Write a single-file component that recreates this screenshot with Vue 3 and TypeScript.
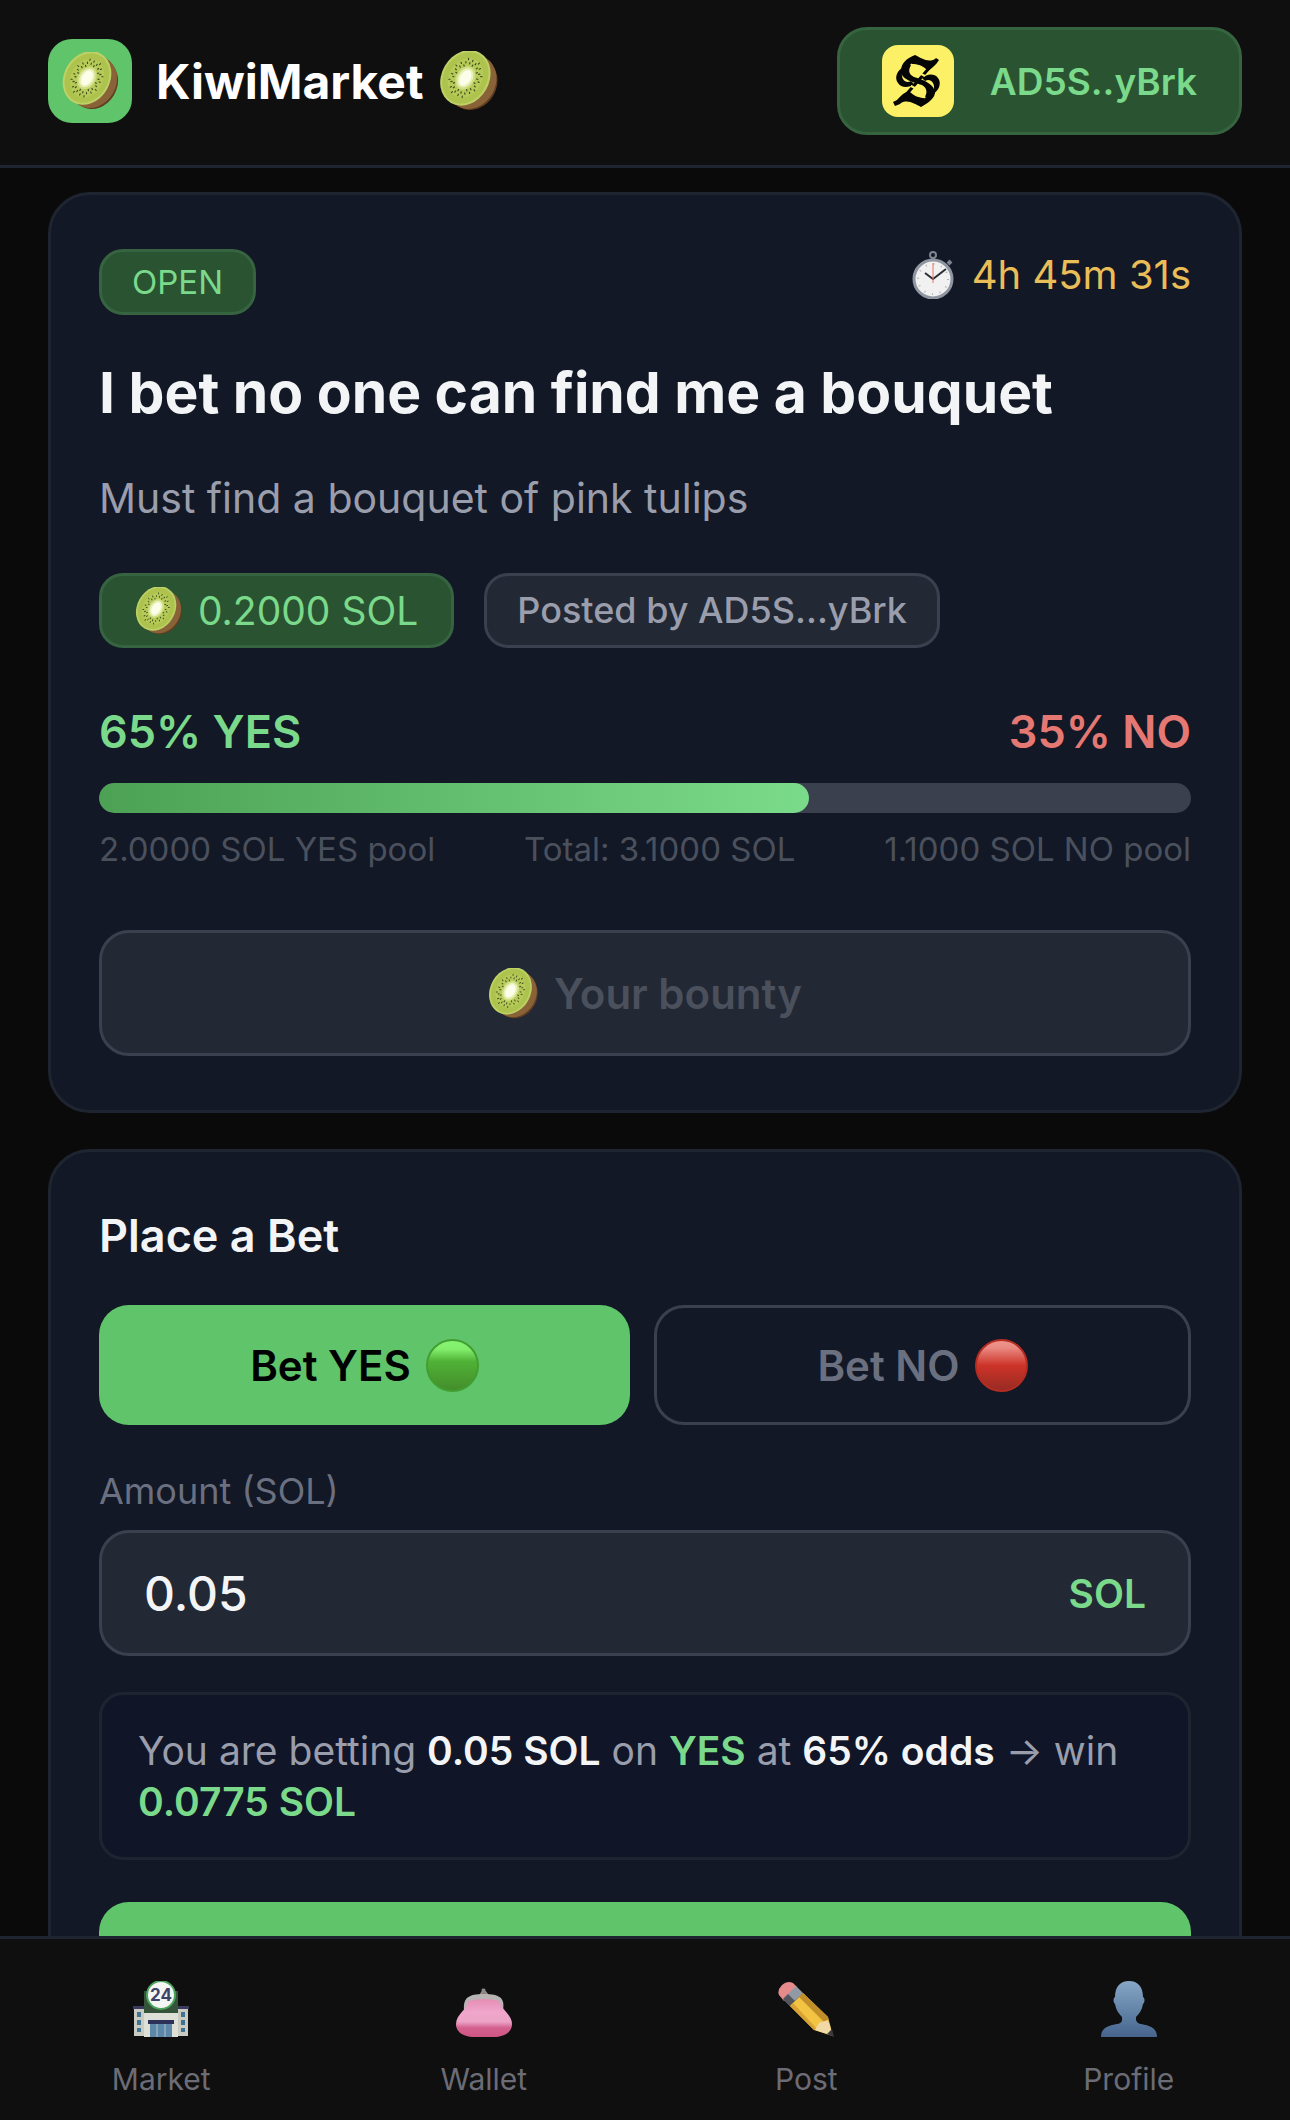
<script setup lang="ts">
import { computed, defineComponent, h, ref } from 'vue'

type Side = 'YES' | 'NO'

interface Tab {
  id: 'market' | 'wallet' | 'post' | 'profile'
  label: string
}

const tabs: Tab[] = [
  { id: 'market', label: 'Market' },
  { id: 'wallet', label: 'Wallet' },
  { id: 'post', label: 'Post' },
  { id: 'profile', label: 'Profile' },
]

const yesPool = 2
const noPool = 1.1
const yesOdds = computed(() => Math.round((yesPool / (yesPool + noPool)) * 100))
const total = computed(() => (yesPool + noPool).toFixed(4))

const side = ref<Side>('YES')
const amount = ref('0.05')
const odds = computed(() => (side.value === 'YES' ? yesOdds.value : 100 - yesOdds.value))
const payout = computed(() => {
  const pool = side.value === 'YES' ? yesPool : noPool
  return ((Number(amount.value) || 0) * (yesPool + noPool) / pool).toFixed(4)
})

// Seeds radiate in uneven rings around the pale core of the fruit.
const seeds = Array.from({ length: 40 }, (_, i) => {
  const a = (i / 40) * Math.PI * 2
  const r = 1 + ((i * 2) % 5) * 0.11
  return {
    x1: Math.cos(a) * 9.5 * r,
    y1: Math.sin(a) * 13 * r,
    x2: Math.cos(a) * (9.5 * r + 1.2),
    y2: Math.sin(a) * (13 * r + 1.4),
  }
})

const KiwiIcon = defineComponent({
  setup: () => () =>
    h('svg', { viewBox: '1 0 57 58', 'aria-hidden': 'true' }, [
      h('ellipse', { cx: 34, cy: 32, rx: 22, ry: 26, fill: '#5f3d22', transform: 'rotate(30 34 32)' }),
      h('ellipse', { cx: 32, cy: 30, rx: 23, ry: 27, fill: '#8a6238', transform: 'rotate(30 32 30)' }),
      h('g', { transform: 'translate(26 26) rotate(30)' }, [
        h('ellipse', { rx: 23, ry: 28, fill: '#bdd166' }),
        h('ellipse', { rx: 21, ry: 26, fill: '#aec34d' }),
        h('ellipse', { rx: 16, ry: 20, fill: '#b6ca58' }),
        h('ellipse', { rx: 9, ry: 12, fill: '#cfdd83' }),
        ...seeds.map((s) => h('line', { ...s, stroke: '#3d4a1e', 'stroke-width': 1.1, 'stroke-linecap': 'round' })),
        h('ellipse', { rx: 7, ry: 10, fill: '#e9f1b8' }),
        h('ellipse', { rx: 5, ry: 8, fill: '#fdfeea' }),
      ]),
    ]),
})
</script>

<template>
  <div class="app">
    <header class="topbar">
      <a class="brand" href="#">
        <span class="brand-tile"><KiwiIcon class="kiwi-tile" /></span>
        <span class="brand-name">KiwiMarket</span>
        <KiwiIcon class="kiwi-brand" />
      </a>
      <button class="wallet" type="button">
        <svg class="wallet-logo" viewBox="0 0 72 72" aria-hidden="true">
          <rect width="72" height="72" rx="16" fill="#fcf067" />
          <g fill="#050505">
            <path d="M33 10C39 13 46 18 53 14L54 13L57 15C54 20 50 23 46 26C41 20 35 19 30 19C26 24 26 29 32 32C43 35 53 40 53 48C52 54 46 58 39 62C33 59 26 54 19 58L18 59L13 61L11 57L15 55C19 50 23 47 27 46C32 51 37 53 42 53C46 48 45 43 40 40C30 37 19 34 19 26C19 18 25 13 33 10Z" />
            <path d="M22 22C15 25 12 33 16 38C19 43 27 43 32 39L29 36C24 39 19 35 20 27Z" />
            <path d="M50 50C57 46 60 38 56 33C52 28 45 29 40 33L43 36C48 33 53 37 52 45Z" />
          </g>
          <path d="M48 22L36 36L22 52" fill="none" stroke="#050505" stroke-width="3" />
          <path d="M29 19Q34 27 43 31M43 53Q38 45 29 41" fill="none" stroke="#fcf067" stroke-width="2" />
        </svg>
        <span>AD5S..yBrk</span>
      </button>
    </header>

    <main class="content">
      <section class="card">
        <div class="card-head">
          <span class="status">OPEN</span>
          <span class="timer">
            <svg class="stopwatch" viewBox="0 0 42 48" aria-hidden="true">
              <circle cx="21" cy="4" r="3" fill="none" stroke="#7f858f" stroke-width="2" />
              <path d="M21 6V10M36 13L39 10" stroke="#7f858f" stroke-width="4" />
              <circle cx="21" cy="28" r="19" fill="#f1f1f1" stroke="#8f96a1" stroke-width="3" />
              <circle cx="21" cy="28" r="15" fill="none" stroke="#b4b4b4" stroke-width="2" stroke-dasharray="1 6.85" />
              <path d="M13 22L21 28L34 18" fill="none" stroke="#2b2e35" stroke-width="2" />
              <path d="M21 32V12" stroke="#e9735e" stroke-width="1" />
            </svg>
            4h 45m 31s
          </span>
        </div>
        <h1 class="title">I bet no one can find me a bouquet</h1>
        <p class="description">Must find a bouquet of pink tulips</p>
        <div class="chips">
          <span class="chip chip-reward"><KiwiIcon class="kiwi-chip" />0.2000 SOL</span>
          <span class="chip chip-author">Posted by AD5S...yBrk</span>
        </div>
        <div class="odds">
          <span class="yes">{{ yesOdds }}% YES</span>
          <span class="no">{{ 100 - yesOdds }}% NO</span>
        </div>
        <div class="track"><div class="fill" :style="{ width: yesOdds + '%' }"></div></div>
        <div class="pools">
          <span>{{ yesPool.toFixed(4) }} SOL YES pool</span>
          <span>Total: {{ total }} SOL</span>
          <span>{{ noPool.toFixed(4) }} SOL NO pool</span>
        </div>
        <button class="bounty" type="button" disabled><KiwiIcon class="kiwi-bounty" />Your bounty</button>
      </section>

      <section class="card">
        <h2 class="heading">Place a Bet</h2>
        <div class="sides">
          <button class="side" :class="{ picked: side === 'YES' }" type="button" @click="side = 'YES'">
            Bet YES
            <svg class="ball" viewBox="0 0 54 54" aria-hidden="true">
              <defs>
                <linearGradient id="ball-green" x2="0" y2="1">
                  <stop offset="0" stop-color="#86f573" />
                  <stop offset=".18" stop-color="#83ee6c" />
                  <stop offset=".42" stop-color="#4fb236" />
                  <stop offset="1" stop-color="#448c2b" />
                </linearGradient>
              </defs>
              <circle cx="27" cy="27" r="26" fill="url(#ball-green)" stroke="#439e31" stroke-width="2" />
            </svg>
          </button>
          <button class="side" :class="{ picked: side === 'NO' }" type="button" @click="side = 'NO'">
            Bet NO
            <svg class="ball" viewBox="0 0 54 54" aria-hidden="true">
              <defs>
                <linearGradient id="ball-red" x2="0" y2="1">
                  <stop offset="0" stop-color="#ee958d" />
                  <stop offset=".15" stop-color="#ea8a82" />
                  <stop offset=".5" stop-color="#cd3328" />
                  <stop offset="1" stop-color="#962b23" />
                </linearGradient>
              </defs>
              <circle cx="27" cy="27" r="26" fill="url(#ball-red)" stroke="#b52c22" stroke-width="2" />
            </svg>
          </button>
        </div>
        <label class="label" for="amount">Amount (SOL)</label>
        <div class="field">
          <input id="amount" v-model="amount" type="text" inputmode="decimal" />
          <span class="unit">SOL</span>
        </div>
        <p class="summary">
          You are betting <strong>{{ amount }} SOL</strong> on
          <strong class="yes">{{ side }}</strong> at <strong>{{ odds }}% odds</strong> → win
          <strong class="yes">{{ payout }} SOL</strong>
        </p>
        <button class="submit" type="button" aria-label="Place bet"></button>
      </section>
    </main>

    <nav class="tabs">
      <a v-for="tab in tabs" :key="tab.id" class="tab" href="#">
        <svg v-if="tab.id === 'market'" class="tab-icon" viewBox="0 0 56 56" aria-hidden="true">
          <path d="M1 27H12V55H1ZM44 27H55V55H44Z" fill="#c9cac2" />
          <path d="M0 25H12V28H0ZM44 25H56V28H44Z" fill="#3a3a5c" />
          <path d="M11 10H45V56H11Z" fill="#dedfd6" />
          <path d="M11 10H45V32H11Z" fill="#35533b" />
          <path d="M4 31H8V36H4ZM4 39H8V44H4ZM4 47H8V51H4ZM48 31H52V36H48ZM48 39H52V44H48ZM48 47H52V51H48Z" fill="#3f7391" />
          <path d="M17 43H39V56H17Z" fill="#5c87a6" />
          <path d="M24 43V56M32 43V56" stroke="#a9c3d3" stroke-width="1" />
          <path d="M15 39H41V43H15Z" fill="#2e3157" />
          <circle cx="28" cy="14" r="14" fill="#f4f6f4" stroke="#4ba45c" stroke-width="2" />
          <text x="28" y="20" text-anchor="middle" class="shop-hours">24</text>
        </svg>
        <svg v-else-if="tab.id === 'wallet'" class="tab-icon" viewBox="0 0 56 56" aria-hidden="true">
          <defs>
            <linearGradient id="purse" x2="0" y2="1">
              <stop offset="0" stop-color="#e58db5" />
              <stop offset=".35" stop-color="#f0a6cb" />
              <stop offset=".6" stop-color="#eba3c6" />
              <stop offset=".76" stop-color="#d3608f" />
              <stop offset="1" stop-color="#cf5583" />
            </linearGradient>
          </defs>
          <path d="M25 14L28 9M31 14L27 9" stroke="#8f8a86" stroke-width="3" stroke-linecap="round" />
          <path d="M8 29C7 17 12 13 28 13C44 13 49 17 47 29L43 30H12Z" fill="#b9b4b4" />
          <path d="M12 20Q28 16 44 20C44 28 56 33 56 43C56 52 47 56 38 56H18C9 56 0 52 0 43C0 33 12 28 12 20Z" fill="url(#purse)" />
        </svg>
        <svg v-else-if="tab.id === 'post'" class="tab-icon" viewBox="0 0 56 56" aria-hidden="true">
          <path d="M1 14Q-1 9 4 4Q9 -1 15 2L19 6L6 20Z" fill="#e58b8b" />
          <path d="M5 18L18 5L25 12L12 25Z" fill="#9299a6" />
          <path d="M5 18L10 13L17 20L12 25Z" fill="#55565d" />
          <path d="M12 25L25 12L50 36L55 55L36 49Z" fill="#f3c443" />
          <path d="M21 16L25 12L50 36L51 43L47 42Z" fill="#c08f2a" />
          <path d="M12 25L15 22L39 48L36 49Z" fill="#d9a234" />
          <path d="M37 49L41 42L50 39L55 55Z" fill="#f0d9a4" />
          <path d="M49 53L54 48L56 56Z" fill="#3c3a38" />
        </svg>
        <svg v-else class="tab-icon" viewBox="0 0 56 56" aria-hidden="true">
          <defs>
            <linearGradient id="bust" x2="0" y2="1">
              <stop offset="0" stop-color="#86a7c6" />
              <stop offset="1" stop-color="#46648d" />
            </linearGradient>
          </defs>
          <path d="M28 0C37 0 42 6 42 16C44 17 44 21 42 23C41 29 38 33 35 36V39C36 43 40 43 45 44C52 46 56 49 56 56H0C0 49 4 46 11 44C16 43 21 43 21 39V36C18 33 15 29 14 23C12 21 12 17 14 16C14 6 19 0 28 0Z" fill="url(#bust)" />
        </svg>
        <span>{{ tab.label }}</span>
      </a>
    </nav>
  </div>
</template>

<style>
body {
  background: #0a0a0a;
}
</style>

<style scoped>
.app,
.app * {
  box-sizing: border-box;
}

.app {
  display: flex;
  flex-direction: column;
  height: 100vh;
  background: #0a0a0a;
  color: #f3f4f6;
  font-family: Inter, "Liberation Sans", sans-serif;
}

button,
input {
  margin: 0;
  font-family: inherit;
}

a {
  color: inherit;
  text-decoration: none;
}

svg {
  display: block;
  flex: none;
}

.topbar {
  display: flex;
  flex: none;
  align-items: center;
  justify-content: space-between;
  padding: 27px 48px 30px;
  border-bottom: 3px solid #1f2530;
  background: #0f0f0f;
}

.brand {
  display: flex;
  align-items: center;
  color: #fff;
  font-size: 48px;
  font-weight: 700;
}

.brand-tile {
  display: flex;
  align-items: center;
  justify-content: center;
  width: 84px;
  height: 84px;
  margin-right: 24px;
  border-radius: 24px;
  background: #5fc46a;
}

.kiwi-tile {
  width: 57px;
  height: 58px;
}

.kiwi-brand {
  width: 60px;
  height: 60px;
  margin-left: 15px;
}

.wallet {
  display: flex;
  align-items: center;
  gap: 36px;
  padding: 15px 42px;
  border: 3px solid #366340;
  border-radius: 30px;
  background: #2a5331;
  color: #7ad98a;
  font-size: 37px;
  font-weight: 600;
}

.wallet-logo {
  width: 72px;
  height: 72px;
}

.content {
  display: flex;
  flex: 1;
  flex-direction: column;
  gap: 36px;
  min-height: 0;
  padding: 24px 48px 36px;
  overflow-y: auto;
  scrollbar-width: none;
}

.card {
  display: flex;
  flex: none;
  flex-direction: column;
  padding: 54px 48px;
  border: 3px solid #1f2530;
  border-radius: 42px;
  background: #121826;
}

.card-head {
  display: flex;
  align-items: flex-start;
  justify-content: space-between;
}

.status {
  padding: 0 30px;
  border: 3px solid #366340;
  border-radius: 24px;
  background: #2a5331;
  color: #7ad98a;
  font-size: 33px;
  line-height: 60px;
}

.timer {
  display: flex;
  align-items: center;
  gap: 18px;
  color: #e9bd57;
  font-size: 40px;
  line-height: 51px;
}

.stopwatch {
  width: 42px;
  height: 48px;
}

.title {
  margin: 42px 0 0;
  font-size: 57px;
  font-weight: 700;
  line-height: 72px;
}

.description {
  margin: 39px 0 0;
  color: #9a9eac;
  font-size: 41px;
  line-height: 60px;
}

.chips {
  display: flex;
  flex-wrap: wrap;
  gap: 30px;
  margin-top: 45px;
}

.chip {
  display: flex;
  align-items: center;
  border: 3px solid;
  border-radius: 24px;
  line-height: 69px;
}

.chip-reward {
  gap: 15px;
  padding: 0 33px;
  border-color: #366340;
  background: #2a5331;
  color: #7ad98a;
  font-size: 39px;
}

.chip-author {
  padding: 0 30px;
  border-color: #3a404e;
  background: #222834;
  color: #9a9eac;
  font-size: 36px;
  font-weight: 500;
}

.kiwi-chip {
  width: 48px;
  height: 48px;
}

.odds {
  display: flex;
  justify-content: space-between;
  margin-top: 57px;
  font-size: 45px;
  font-weight: 600;
  line-height: 54px;
}

.yes {
  color: #7ad98a;
}

.no {
  color: #e57873;
}

.track {
  height: 30px;
  margin-top: 24px;
  overflow: hidden;
  border-radius: 15px;
  background: #3a404e;
}

.fill {
  height: 100%;
  border-radius: 15px;
  background: linear-gradient(90deg, #4ca154, #7adb8a);
}

.pools {
  display: flex;
  justify-content: space-between;
  margin-top: 15px;
  color: #4b505d;
  font-size: 33px;
  line-height: 42px;
}

.bounty {
  display: flex;
  align-items: center;
  justify-content: center;
  gap: 15px;
  height: 126px;
  margin-top: 60px;
  border: 3px solid #3a404e;
  border-radius: 30px;
  background: #222834;
  color: #4b505d;
  font-size: 42px;
  font-weight: 600;
}

.kiwi-bounty {
  width: 51px;
  height: 51px;
}

.heading {
  margin: 0;
  font-size: 45px;
  font-weight: 600;
  line-height: 60px;
}

.sides {
  display: flex;
  gap: 24px;
  margin-top: 39px;
}

.side {
  display: flex;
  flex: 1 1 0;
  align-items: center;
  justify-content: center;
  gap: 15px;
  height: 120px;
  padding: 0;
  border: 3px solid #3a404e;
  border-radius: 30px;
  background: transparent;
  color: #6b7080;
  font-size: 42px;
  font-weight: 600;
}

.side.picked {
  border: 0;
  background: #5fc46a;
  color: #000;
}

.ball {
  width: 53px;
  height: 53px;
}

.label {
  margin-top: 42px;
  color: #6b7080;
  font-size: 36px;
  line-height: 48px;
}

.field {
  display: flex;
  align-items: center;
  height: 126px;
  margin-top: 15px;
  padding: 0 42px;
  border: 3px solid #3a404e;
  border-radius: 30px;
  background: #222834;
}

.field input {
  flex: 1;
  min-width: 0;
  padding: 0;
  border: 0;
  outline: 0;
  background: transparent;
  color: #f3f4f6;
  font-size: 48px;
  font-weight: 500;
}

.unit {
  color: #7ad98a;
  font-size: 39px;
  font-weight: 600;
}

.summary {
  margin: 36px 0 0;
  padding: 30px 36px;
  border: 3px solid #1f2530;
  border-radius: 24px;
  background: #101527;
  color: #9a9eac;
  font-size: 39px;
  line-height: 51px;
}

.summary strong {
  font-weight: 600;
}

.summary strong:not(.yes) {
  color: #f3f4f6;
}

.submit {
  height: 126px;
  margin-top: 42px;
  border: 0;
  border-radius: 30px;
  background: #5fc46a;
}

.tabs {
  display: flex;
  flex: none;
  border-top: 3px solid #1f2530;
  background: #0f0f0f;
}

.tab {
  display: flex;
  flex: 1 1 0;
  flex-direction: column;
  align-items: center;
  gap: 21px;
  padding: 42px 0 20px;
  color: #6b6c76;
  font-size: 30px;
  line-height: 42px;
}

.tab-icon {
  width: 56px;
  height: 56px;
}

.shop-hours {
  fill: #3d4268;
  font-size: 17px;
  font-weight: 700;
}
</style>
